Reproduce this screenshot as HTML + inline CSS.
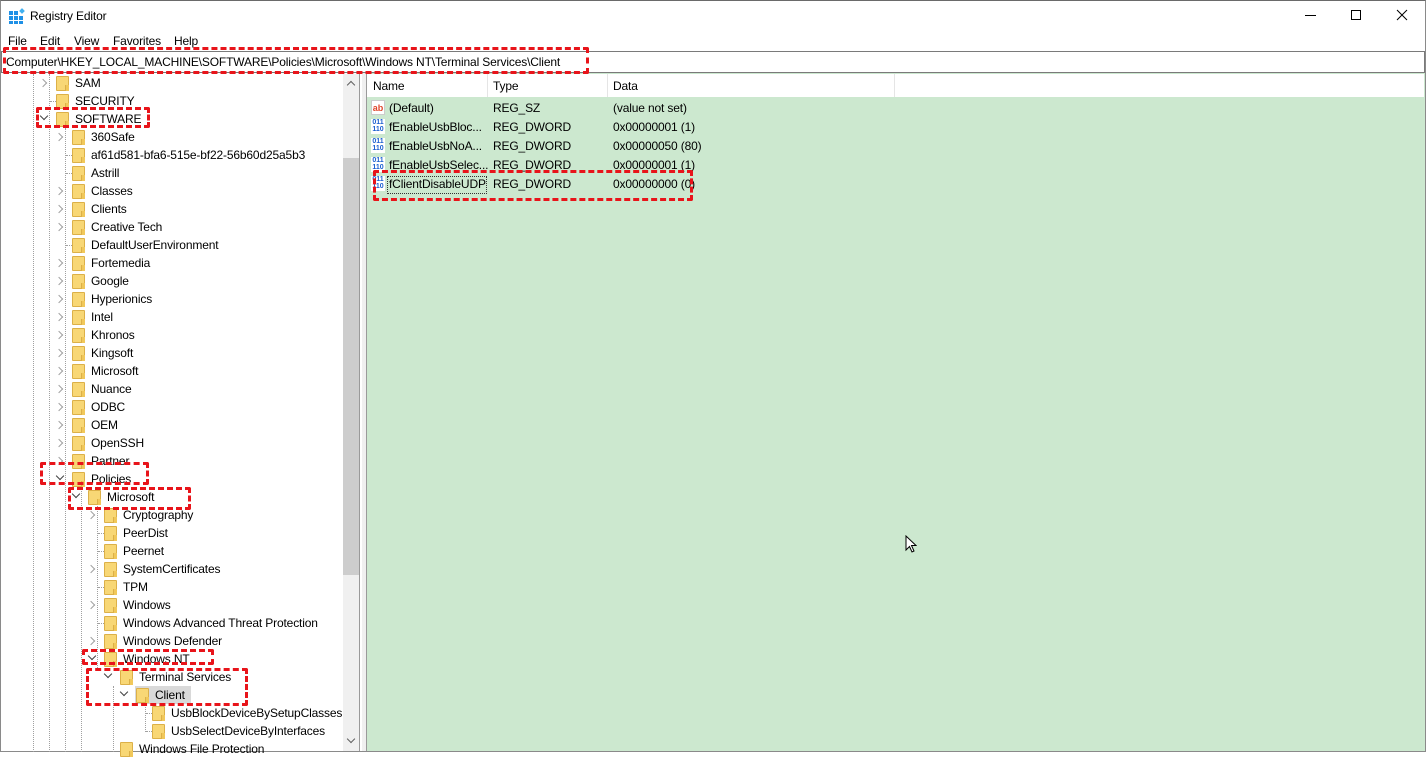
<!DOCTYPE html>
<html><head><meta charset="utf-8"><style>
*{margin:0;padding:0;box-sizing:border-box}
body{width:1426px;height:752px;position:relative;overflow:hidden;background:#fff;font-family:"Liberation Sans",sans-serif;font-size:12px;color:#000;letter-spacing:-0.15px}
.a{position:absolute}
.t{position:absolute;white-space:nowrap;line-height:18px;height:18px}
.f{position:absolute;width:13px;height:15px;background:#f8d775;border:1px solid #dcb048;border-radius:1px}
.f:after{content:"";position:absolute;right:-1px;bottom:-1px;width:3px;height:6px;border-left:1px solid #dcb048;background:#f1c85a}
.cr{position:absolute;width:6px;height:6px;border-right:1.5px solid #a0a0a0;border-bottom:1.5px solid #a0a0a0;transform:rotate(-45deg)}
.cd{position:absolute;width:6px;height:6px;border-right:1.5px solid #404040;border-bottom:1.5px solid #404040;transform:rotate(45deg)}
.dh{position:absolute;height:1px;width:8px;border-top:1px dotted #a0a0a0}
.dv{position:absolute;width:1px;border-left:1px dotted #a0a0a0}
.red{position:absolute;border:3px dashed #e8141a;border-radius:2px}
.ico{position:absolute;width:14px;height:15px;font-size:9px;font-weight:bold;line-height:15px;text-align:center;letter-spacing:0}
</style></head><body>
<div class="a" style="left:0;top:0;width:1426px;height:752px;border:1px solid #8a8a8a;border-top:1px solid #6a6a6a"></div>
<svg class="a" style="left:9px;top:8px" width="16" height="16"><g fill="#1e90e6"><rect x="0" y="3" width="4" height="4"/><rect x="5" y="3" width="4" height="4"/><rect x="0" y="8" width="4" height="4"/><rect x="5" y="8" width="4" height="4"/><rect x="10" y="8" width="4" height="4"/><rect x="0" y="13" width="4" height="3"/><rect x="5" y="13" width="4" height="3"/><rect x="10" y="13" width="4" height="3"/></g><rect x="11" y="1" width="4" height="4" fill="#40b0f0" transform="rotate(45 13 3)"/></svg>
<div class="t" style="left:30px;top:7px">Registry Editor</div>
<div class="a" style="left:1305px;top:15px;width:11px;height:1px;background:#000"></div>
<div class="a" style="left:1351px;top:10px;width:10px;height:10px;border:1px solid #000"></div>
<svg class="a" style="left:1396px;top:9px" width="12" height="12"><path d="M1 1L11 11M11 1L1 11" stroke="#000" stroke-width="1"/></svg>
<div class="t" style="left:8px;top:32px">File</div>
<div class="t" style="left:40px;top:32px">Edit</div>
<div class="t" style="left:74px;top:32px">View</div>
<div class="t" style="left:113px;top:32px">Favorites</div>
<div class="t" style="left:174px;top:32px">Help</div>
<div class="a" style="left:1px;top:51px;width:1424px;height:22px;border:1px solid #7a7a7a;background:#fff"></div>
<div class="t" style="left:6px;top:53px">Computer\HKEY_LOCAL_MACHINE\SOFTWARE\Policies\Microsoft\Windows NT\Terminal Services\Client</div>
<div class="a" style="left:1px;top:73px;width:359px;height:678px;border-right:1px solid #9a9a9a"></div>
<div class="a" style="left:343px;top:74px;width:16px;height:677px;background:#f0f0f0"></div>
<div class="a" style="left:343px;top:158px;width:16px;height:417px;background:#cdcdcd"></div>
<div class="cr" style="left:348px;top:82px;transform:rotate(-135deg);border-color:#606060"></div>
<div class="cd" style="left:348px;top:736px;border-color:#606060"></div>
<div class="a" style="left:362px;top:73px;width:4px;height:678px;background:#f0f0f0"></div>
<div class="dv" style="left:33px;top:74px;height:678px"></div>
<div class="dv" style="left:49px;top:74px;height:678px"></div>
<div class="dv" style="left:65px;top:128px;height:624px"></div>
<div class="dv" style="left:81px;top:488px;height:264px"></div>
<div class="dv" style="left:97px;top:506px;height:162px"></div>
<div class="dv" style="left:113px;top:686px;height:66px"></div>
<div class="dv" style="left:145px;top:704px;height:28px"></div>

<div class="cr" style="left:40px;top:80px"></div><div class="f" style="left:56px;top:76px"></div><div class="t" style="left:75px;top:74px">SAM</div>
<div class="dh" style="left:50px;top:101px"></div><div class="f" style="left:56px;top:94px"></div><div class="t" style="left:75px;top:92px">SECURITY</div>
<div class="cd" style="left:41px;top:113px"></div><div class="f" style="left:56px;top:112px"></div><div class="t" style="left:75px;top:110px">SOFTWARE</div>
<div class="cr" style="left:56px;top:134px"></div><div class="f" style="left:72px;top:130px"></div><div class="t" style="left:91px;top:128px">360Safe</div>
<div class="dh" style="left:66px;top:155px"></div><div class="f" style="left:72px;top:148px"></div><div class="t" style="left:91px;top:146px">af61d581-bfa6-515e-bf22-56b60d25a5b3</div>
<div class="dh" style="left:66px;top:173px"></div><div class="f" style="left:72px;top:166px"></div><div class="t" style="left:91px;top:164px">Astrill</div>
<div class="cr" style="left:56px;top:188px"></div><div class="f" style="left:72px;top:184px"></div><div class="t" style="left:91px;top:182px">Classes</div>
<div class="cr" style="left:56px;top:206px"></div><div class="f" style="left:72px;top:202px"></div><div class="t" style="left:91px;top:200px">Clients</div>
<div class="cr" style="left:56px;top:224px"></div><div class="f" style="left:72px;top:220px"></div><div class="t" style="left:91px;top:218px">Creative Tech</div>
<div class="dh" style="left:66px;top:245px"></div><div class="f" style="left:72px;top:238px"></div><div class="t" style="left:91px;top:236px">DefaultUserEnvironment</div>
<div class="cr" style="left:56px;top:260px"></div><div class="f" style="left:72px;top:256px"></div><div class="t" style="left:91px;top:254px">Fortemedia</div>
<div class="cr" style="left:56px;top:278px"></div><div class="f" style="left:72px;top:274px"></div><div class="t" style="left:91px;top:272px">Google</div>
<div class="cr" style="left:56px;top:296px"></div><div class="f" style="left:72px;top:292px"></div><div class="t" style="left:91px;top:290px">Hyperionics</div>
<div class="cr" style="left:56px;top:314px"></div><div class="f" style="left:72px;top:310px"></div><div class="t" style="left:91px;top:308px">Intel</div>
<div class="cr" style="left:56px;top:332px"></div><div class="f" style="left:72px;top:328px"></div><div class="t" style="left:91px;top:326px">Khronos</div>
<div class="cr" style="left:56px;top:350px"></div><div class="f" style="left:72px;top:346px"></div><div class="t" style="left:91px;top:344px">Kingsoft</div>
<div class="cr" style="left:56px;top:368px"></div><div class="f" style="left:72px;top:364px"></div><div class="t" style="left:91px;top:362px">Microsoft</div>
<div class="cr" style="left:56px;top:386px"></div><div class="f" style="left:72px;top:382px"></div><div class="t" style="left:91px;top:380px">Nuance</div>
<div class="cr" style="left:56px;top:404px"></div><div class="f" style="left:72px;top:400px"></div><div class="t" style="left:91px;top:398px">ODBC</div>
<div class="cr" style="left:56px;top:422px"></div><div class="f" style="left:72px;top:418px"></div><div class="t" style="left:91px;top:416px">OEM</div>
<div class="cr" style="left:56px;top:440px"></div><div class="f" style="left:72px;top:436px"></div><div class="t" style="left:91px;top:434px">OpenSSH</div>
<div class="cr" style="left:56px;top:458px"></div><div class="f" style="left:72px;top:454px"></div><div class="t" style="left:91px;top:452px">Partner</div>
<div class="cd" style="left:57px;top:473px"></div><div class="f" style="left:72px;top:472px"></div><div class="t" style="left:91px;top:470px">Policies</div>
<div class="cd" style="left:73px;top:491px"></div><div class="f" style="left:88px;top:490px"></div><div class="t" style="left:107px;top:488px">Microsoft</div>
<div class="cr" style="left:88px;top:512px"></div><div class="f" style="left:104px;top:508px"></div><div class="t" style="left:123px;top:506px">Cryptography</div>
<div class="dh" style="left:98px;top:533px"></div><div class="f" style="left:104px;top:526px"></div><div class="t" style="left:123px;top:524px">PeerDist</div>
<div class="dh" style="left:98px;top:551px"></div><div class="f" style="left:104px;top:544px"></div><div class="t" style="left:123px;top:542px">Peernet</div>
<div class="cr" style="left:88px;top:566px"></div><div class="f" style="left:104px;top:562px"></div><div class="t" style="left:123px;top:560px">SystemCertificates</div>
<div class="dh" style="left:98px;top:587px"></div><div class="f" style="left:104px;top:580px"></div><div class="t" style="left:123px;top:578px">TPM</div>
<div class="cr" style="left:88px;top:602px"></div><div class="f" style="left:104px;top:598px"></div><div class="t" style="left:123px;top:596px">Windows</div>
<div class="dh" style="left:98px;top:623px"></div><div class="f" style="left:104px;top:616px"></div><div class="t" style="left:123px;top:614px">Windows Advanced Threat Protection</div>
<div class="cr" style="left:88px;top:638px"></div><div class="f" style="left:104px;top:634px"></div><div class="t" style="left:123px;top:632px">Windows Defender</div>
<div class="cd" style="left:89px;top:653px"></div><div class="f" style="left:104px;top:652px"></div><div class="t" style="left:123px;top:650px">Windows NT</div>
<div class="cd" style="left:105px;top:671px"></div><div class="f" style="left:120px;top:670px"></div><div class="t" style="left:139px;top:668px">Terminal Services</div>
<div class="a" style="left:135px;top:686px;width:56px;height:18px;background:#d9d9d9"></div>
<div class="cd" style="left:121px;top:689px"></div><div class="f" style="left:136px;top:688px"></div><div class="t" style="left:155px;top:686px">Client</div>
<div class="dh" style="left:146px;top:713px"></div><div class="f" style="left:152px;top:706px"></div><div class="t" style="left:171px;top:704px">UsbBlockDeviceBySetupClasses</div>
<div class="dh" style="left:146px;top:731px"></div><div class="f" style="left:152px;top:724px"></div><div class="t" style="left:171px;top:722px">UsbSelectDeviceByInterfaces</div>
<div class="f" style="left:120px;top:742px"></div><div class="t" style="left:139px;top:740px">Windows File Protection</div>

<div class="a" style="left:366px;top:73px;width:1059px;height:678px;border-left:1px solid #9a9a9a;background:#cce8cf"></div>
<div class="a" style="left:367px;top:74px;width:1057px;height:23px;background:#fff"></div>
<div class="a" style="left:487px;top:74px;width:1px;height:23px;background:#e5e5e5"></div>
<div class="a" style="left:607px;top:74px;width:1px;height:23px;background:#e5e5e5"></div>
<div class="a" style="left:894px;top:74px;width:1px;height:23px;background:#e5e5e5"></div>
<div class="t" style="left:373px;top:77px">Name</div>
<div class="t" style="left:493px;top:77px">Type</div>
<div class="t" style="left:613px;top:77px">Data</div>

<div class="ico" style="left:371px;top:100px;color:#e0452a;background:#fff;border:1px solid #ccc">ab</div>
<div class="t" style="left:389px;top:99px">(Default)</div><div class="t" style="left:493px;top:99px">REG_SZ</div><div class="t" style="left:613px;top:99px">(value not set)</div>
<div class="ico" style="left:371px;top:119px;color:#1a5fd0;background:#fff;font-size:7px;line-height:7px">011<br>110</div>
<div class="t" style="left:389px;top:118px">fEnableUsbBloc...</div><div class="t" style="left:493px;top:118px">REG_DWORD</div><div class="t" style="left:613px;top:118px">0x00000001 (1)</div>
<div class="ico" style="left:371px;top:138px;color:#1a5fd0;background:#fff;font-size:7px;line-height:7px">011<br>110</div>
<div class="t" style="left:389px;top:137px">fEnableUsbNoA...</div><div class="t" style="left:493px;top:137px">REG_DWORD</div><div class="t" style="left:613px;top:137px">0x00000050 (80)</div>
<div class="ico" style="left:371px;top:157px;color:#1a5fd0;background:#fff;font-size:7px;line-height:7px">011<br>110</div>
<div class="t" style="left:389px;top:156px">fEnableUsbSelec...</div><div class="t" style="left:493px;top:156px">REG_DWORD</div><div class="t" style="left:613px;top:156px">0x00000001 (1)</div>
<div class="ico" style="left:371px;top:176px;color:#1a5fd0;background:#fff;font-size:7px;line-height:7px">011<br>110</div>
<div class="a" style="left:387px;top:176px;width:100px;height:18px;border:1px dotted #333"></div>
<div class="t" style="left:389px;top:175px">fClientDisableUDP</div><div class="t" style="left:493px;top:175px">REG_DWORD</div><div class="t" style="left:613px;top:175px">0x00000000 (0)</div>

<svg class="a" style="left:905px;top:535px" width="12" height="19"><path d="M1 1V15L4.5 11.5L7 17L9 16L6.5 10.5H11Z" fill="#fff" stroke="#000" stroke-width="1"/></svg>

<div class="red" style="left:3px;top:47px;width:586px;height:27px"></div>
<div class="red" style="left:36px;top:107px;width:114px;height:21px"></div>
<div class="red" style="left:40px;top:462px;width:109px;height:23px"></div>
<div class="red" style="left:68px;top:487px;width:123px;height:23px"></div>
<div class="red" style="left:82px;top:649px;width:132px;height:16px"></div>
<div class="red" style="left:86px;top:668px;width:162px;height:38px"></div>
<div class="red" style="left:373px;top:170px;width:320px;height:31px"></div>
</body></html>
